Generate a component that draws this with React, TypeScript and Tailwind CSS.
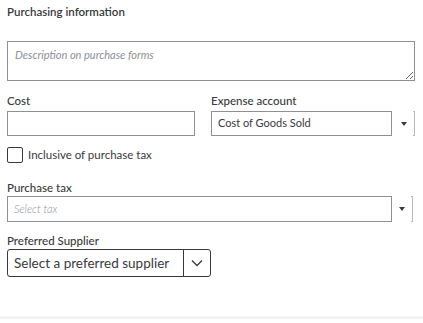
export default function App() {
  return (
    <div className="w-[423px] h-[323px] bg-white font-['Lato',sans-serif] text-[#393a3d] flex flex-col">
      <div className="flex-1 px-[7px] pt-[5px]">
        <h2 className="text-[11.5px] leading-[14px] font-semibold">Purchasing information</h2>

        <textarea
          className="mt-[22px] block w-[408px] h-[40px] border border-[#8d9096] px-[7px] pt-[5px] text-[11px] italic placeholder:text-[#8d9096] outline-none"
          placeholder="Description on purchase forms"
        />

        <div className="mt-[13px] flex gap-[16px]">
          <div className="w-[188px]">
            <label className="block text-[11.5px] leading-[14px] font-medium">Cost</label>
            <input className="mt-[3px] block w-[188px] h-[25px] border border-[#8d9096] outline-none" />
          </div>
          <div className="w-[204px]">
            <label className="block text-[11.5px] leading-[14px] font-medium">Expense account</label>
            <div className="mt-[3px] flex h-[25px]">
              <div className="w-[181px] border border-[#8d9096] px-[6px] flex items-center text-[11px]">
                Cost of Goods Sold
              </div>
              <div className="flex-1 flex items-center justify-center">
                <svg width="6" height="4" viewBox="0 0 6 4" className="ml-[2px]">
                  <path d="M0 0h6L3 4z" fill="#393a3d" />
                </svg>
              </div>
              <div className="w-[2px] border border-l-0 border-[#b9babc]" />
            </div>
          </div>
        </div>

        <label className="mt-[11px] flex items-center gap-[5px] text-[11.5px] leading-[16px]">
          <span className="w-[16px] h-[16px] border border-[#393a3d] rounded-[2px] bg-white" />
          Inclusive of purchase tax
        </label>

        <div className="mt-[18px]">
          <label className="block text-[11.5px] leading-[14px] font-medium">Purchase tax</label>
          <div className="mt-[1px] flex h-[26px] w-[406px]">
            <div className="w-[385px] border border-[#8d9096] px-[6px] flex items-center text-[11px] italic font-light text-[#8d9096]">
              Select tax
            </div>
            <div className="flex-1 flex items-center justify-center">
              <svg width="6" height="4" viewBox="0 0 6 4">
                <path d="M0 0h6L3 4z" fill="#393a3d" />
              </svg>
            </div>
            <div className="w-[2px] border border-l-0 border-[#b9babc]" />
          </div>
        </div>

        <div className="mt-[12px]">
          <label className="block text-[11.5px] leading-[14px] font-medium">Preferred Supplier</label>
          <div className="mt-[1px] flex h-[28px] w-[204px] border border-[#393a3d] rounded-[3px]">
            <div className="w-[176px] border-r border-[#393a3d] px-[6px] flex items-center text-[13.5px]">
              Select a preferred supplier
            </div>
            <div className="flex-1 flex items-center justify-center">
              <svg width="12" height="8" viewBox="0 0 12 8" fill="none">
                <path d="M1 1.5l5 5 5-5" stroke="#393a3d" strokeWidth="1.3" />
              </svg>
            </div>
          </div>
        </div>
      </div>
      <div className="h-[3px] bg-[#f2f2f6] mb-[4px]" />
    </div>
  );
}
